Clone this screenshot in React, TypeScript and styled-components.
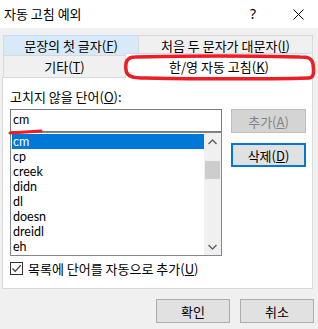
import React from "react";
import styled, { createGlobalStyle } from "styled-components";

const Global = createGlobalStyle`
  html, body { margin: 0; padding: 0; }
  body {
    background: #f0f0f0;
    font-family: "Noto Sans CJK KR", sans-serif;
    font-size: 13px;
    color: #000;
  }
  * { box-sizing: border-box; }
`;

const Window = styled.div`
  position: relative;
  width: 318px;
  height: 329px;
  background: #f0f0f0;
  display: flex;
  flex-direction: column;
  overflow: hidden;
`;

const TitleBar = styled.div`
  height: 28px;
  background: #fff;
  display: flex;
  align-items: center;
  padding-left: 4px;
`;

const Title = styled.div`
  flex: 1;
  font-size: 13px;
  line-height: 16px;
`;

const HelpGlyph = styled.div`
  width: 20px;
  margin-right: 15px;
  text-align: center;
  font-size: 14px;
  line-height: 16px;
  font-family: "Noto Sans", sans-serif;
`;

const CloseBox = styled.div`
  width: 40px;
  display: flex;
  justify-content: center;
  align-items: center;
`;

const Body = styled.div`
  padding: 7px 5px 0 2px;
  display: flex;
  flex-direction: column;
`;

const TabRows = styled.div`
  margin-left: 1px;
  display: flex;
  flex-direction: column;
`;

const TabRow = styled.div<{ $h: number }>`
  display: flex;
  height: ${(p) => p.$h}px;
  align-items: flex-end;
`;

type TabState = "normal" | "hover" | "active";

const Tab = styled.div<{ $w?: number; $state: TabState }>`
  ${(p) => (p.$w ? `width: ${p.$w}px;` : "flex: 1;")}
  height: ${(p) => (p.$state === "active" ? "25px" : "100%")};
  margin-left: -1px;
  &:first-child { margin-left: 0; }
  display: flex;
  align-items: center;
  justify-content: center;
  font-size: 13px;
  line-height: 15px;
  white-space: nowrap;
  border: 1px solid ${(p) => (p.$state === "hover" ? "#c5def5" : "#d9d9d9")};
  border-bottom: none;
  background: ${(p) =>
    p.$state === "hover" ? "#d8eaf9" : p.$state === "active" ? "#fff" : "#f0f0f0"};
  position: relative;
  z-index: ${(p) => (p.$state === "active" ? 2 : 1)};
  margin-bottom: ${(p) => (p.$state === "active" ? "-1px" : "0")};
  padding-top: ${(p) => (p.$state === "active" ? "1px" : "0")};
`;

const Panel = styled.div`
  height: 212px;
  background: #fff;
  border: 1px solid #d9d9d9;
  padding: 12px 0 0 7px;
  display: flex;
  flex-direction: column;
`;

const FieldLabel = styled.div`
  line-height: 15px;
  height: 15px;
  margin-top: -1px;
  margin-bottom: 5px;
`;

const ContentRow = styled.div`
  display: flex;
  align-items: flex-start;
`;

const LeftCol = styled.div`
  width: 212px;
  display: flex;
  flex-direction: column;
`;

const TextBox = styled.div`
  height: 23px;
  border: 1px solid #7a7a7a;
  padding-left: 2px;
  line-height: 20px;
  font-family: Lato, sans-serif;
  font-size: 12.5px;
`;

const ListBox = styled.div`
  height: 124px;
  border: 1px solid #828790;
  display: flex;
`;

const Items = styled.div`
  width: 193px;
  padding: 1px 0 0 1px;
  display: flex;
  flex-direction: column;
`;

const Item = styled.div<{ $selected?: boolean }>`
  height: 15px;
  line-height: 15px;
  padding-left: 1px;
  font-family: Lato, sans-serif;
  font-size: 12.5px;
  background: ${(p) => (p.$selected ? "#0078d7" : "transparent")};
  color: ${(p) => (p.$selected ? "#fff" : "#000")};
`;

const ScrollBar = styled.div`
  width: 17px;
  background: #f0f0f0;
  display: flex;
  flex-direction: column;
`;

const ArrowBox = styled.div`
  height: 17px;
  display: flex;
  align-items: center;
  justify-content: center;
`;

const Thumb = styled.div`
  height: 18px;
  margin: 11px 1px 0 1px;
  background: #cdcdcd;
`;

const Spacer = styled.div`
  flex: 1;
`;

const RightCol = styled.div`
  margin-left: 9px;
  width: 75px;
  display: flex;
  flex-direction: column;
  gap: 10px;
`;

const Button = styled.div<{ $variant?: "normal" | "disabled" | "default"; $w?: number }>`
  width: ${(p) => (p.$w ? `${p.$w}px` : "100%")};
  height: 24px;
  display: flex;
  align-items: center;
  justify-content: center;
  font-size: 13px;
  line-height: 15px;
  background: ${(p) => (p.$variant === "disabled" ? "#d4d4d4" : "#e1e1e1")};
  color: ${(p) => (p.$variant === "disabled" ? "#838383" : "#000")};
  border: ${(p) =>
    p.$variant === "default"
      ? "2px solid #0078d7"
      : p.$variant === "disabled"
      ? "1px solid #bfbfbf"
      : "1px solid #adadad"};
`;

const CheckRow = styled.div`
  margin-top: 6px;
  display: flex;
  align-items: center;
  height: 13px;
`;

const CheckBox = styled.div`
  width: 13px;
  height: 13px;
  border: 1px solid #333;
  background: #fff;
  display: flex;
  align-items: center;
  justify-content: center;
`;

const CheckLabel = styled.div`
  margin-left: 5px;
  line-height: 15px;
`;

const Footer = styled.div`
  margin-top: 10px;
  display: flex;
  justify-content: flex-end;
  gap: 10px;
  padding-right: 4px;
`;

const Overlay = styled.svg`
  position: absolute;
  left: 0;
  top: 0;
  pointer-events: none;
  z-index: 10;
`;

const words = ["cm", "cp", "creek", "didn", "dl", "doesn", "dreidl", "eh"];

export default function App() {
  return (
    <>
      <Global />
      <Window>
        <TitleBar>
          <Title>자동 고침 예외</Title>
          <HelpGlyph>?</HelpGlyph>
          <CloseBox>
            <svg width="11" height="11" viewBox="0 0 11 11">
              <path d="M0.5 0.5 L10.5 10.5 M10.5 0.5 L0.5 10.5" stroke="#000" strokeWidth="1" />
            </svg>
          </CloseBox>
        </TitleBar>
        <Body>
          <TabRows>
            <TabRow $h={20}>
              <Tab $w={136} $state="hover">
                문장의 첫 글자(<u>F</u>)
              </Tab>
              <Tab $state="normal">
                처음 두 문자가 대문자(<u>I</u>)
              </Tab>
            </TabRow>
            <TabRow $h={22}>
              <Tab $w={123} $state="normal">
                기타(<u>T</u>)
              </Tab>
              <Tab $state="active">
                한/영 자동 고침(<u>K</u>)
              </Tab>
            </TabRow>
          </TabRows>
          <Panel>
            <FieldLabel>
              고치지 않을 단어(<u>O</u>):
            </FieldLabel>
            <ContentRow>
              <LeftCol>
                <TextBox>cm</TextBox>
                <ListBox>
                  <Items>
                    {words.map((w, i) => (
                      <Item key={w} $selected={i === 0}>
                        {w}
                      </Item>
                    ))}
                  </Items>
                  <ScrollBar>
                    <ArrowBox>
                      <svg width="9" height="6" viewBox="0 0 9 6">
                        <path d="M0.5 5 L4.5 1 L8.5 5" fill="none" stroke="#606060" strokeWidth="1.4" />
                      </svg>
                    </ArrowBox>
                    <Thumb />
                    <Spacer />
                    <ArrowBox>
                      <svg width="9" height="6" viewBox="0 0 9 6">
                        <path d="M0.5 1 L4.5 5 L8.5 1" fill="none" stroke="#606060" strokeWidth="1.4" />
                      </svg>
                    </ArrowBox>
                  </ScrollBar>
                </ListBox>
              </LeftCol>
              <RightCol>
                <Button $variant="disabled">
                  추가(<u>A</u>)
                </Button>
                <Button $variant="default">
                  삭제(<u>D</u>)
                </Button>
              </RightCol>
            </ContentRow>
            <CheckRow>
              <CheckBox>
                <svg width="11" height="11" viewBox="0 0 11 11">
                  <path d="M1.5 5.5 L4.2 8.3 L9.8 2.2" fill="none" stroke="#333" strokeWidth="1.2" />
                </svg>
              </CheckBox>
              <CheckLabel>
                목록에 단어를 자동으로 추가(<u>U</u>)
              </CheckLabel>
            </CheckRow>
          </Panel>
        </Body>
        <Footer>
          <Button $w={74}>확인</Button>
          <Button $w={74}>취소</Button>
        </Footer>
        <Overlay width="318" height="329" viewBox="0 0 318 329">
          <path
            d="M300 57 C 260 56, 180 56, 135 57 C 127 57, 125 62, 126 70 C 127 77, 133 78, 145 78 C 200 79, 270 79, 309 78 C 314 78, 314 72, 313 64 C 312 58, 308 57, 300 57 Z"
            fill="none"
            stroke="#ee1c24"
            strokeWidth="3.5"
            strokeLinecap="round"
          />
          <path d="M10 133 L41 131" stroke="#ee1c24" strokeWidth="3" strokeLinecap="round" />
        </Overlay>
      </Window>
    </>
  );
}
